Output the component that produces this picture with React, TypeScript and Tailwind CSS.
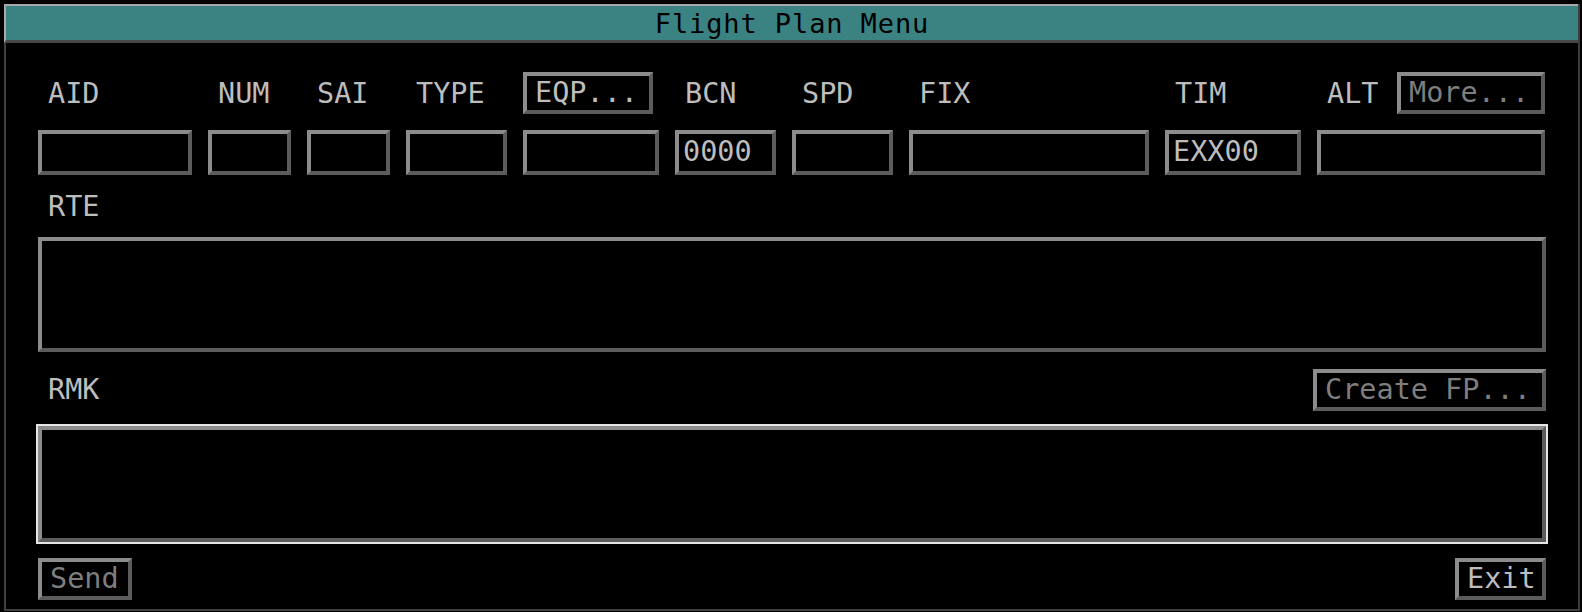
import React from "react";

const bevel =
  "border-4 border-t-[#8c8c8c] border-l-[#8c8c8c] border-b-[#5c5c5c] border-r-[#5c5c5c] bg-black";

function Label({ text }: { text: string }) {
  return (
    <div className="h-[42px] flex items-center pl-[10px] pt-[2px] text-[#bdbdbd]">{text}</div>
  );
}

function Btn({ text, disabled, className = "" }: { text: string; disabled?: boolean; className?: string }) {
  return (
    <div
      className={`h-[42px] flex items-center px-[8px] ${bevel} ${
        disabled ? "text-[#7e7e7e]" : "text-[#bdbdbd]"
      } ${className}`}
    >
      {text}
    </div>
  );
}

function Field({ value = "" }: { value?: string }) {
  return (
    <div className={`h-[45px] flex items-center pl-[4px] text-[#bdbdbd] ${bevel}`}>{value}</div>
  );
}

export default function App() {
  return (
    <div
      className="w-[1582px] h-[612px] bg-black pt-[4px] pl-[4px] pr-[2px] pb-[1px] text-[28.5px] leading-none"
      style={{ fontFamily: '"DejaVu Sans Mono", "Liberation Mono", monospace' }}
    >
      <div className="h-full flex flex-col border-r-2 border-[#3c3c3c]">
        <div className="h-[39px] shrink-0 bg-[#3b8383] border-t-2 border-l-2 border-[#a8a8a8] border-b-[3px] border-b-[#484848] flex items-center justify-center text-black text-[27px] tracking-[0.9px]">
          Flight Plan Menu
        </div>
        <div className="flex-1 flex flex-col border-l-2 border-b-2 border-[#404040] px-[32px] pt-[29px]">
          <div className="grid grid-cols-[154px_83px_83px_101px_136px_101px_101px_240px_136px_228px] gap-x-[16px] gap-y-[16px]">
            <Label text="AID" />
            <Label text="NUM" />
            <Label text="SAI" />
            <Label text="TYPE" />
            <div className="flex">
              <Btn text="EQP..." className="w-[130px]" />
            </div>
            <Label text="BCN" />
            <Label text="SPD" />
            <Label text="FIX" />
            <Label text="TIM" />
            <div className="flex items-center justify-between">
              <Label text="ALT" />
              <Btn text="More..." disabled className="w-[148px]" />
            </div>
            <Field />
            <Field />
            <Field />
            <Field />
            <Field />
            <Field value="0000" />
            <Field />
            <Field />
            <Field value="EXX00" />
            <Field />
          </div>
          <div className="mt-[12px] h-[40px] flex items-center pl-[10px] text-[#bdbdbd]">RTE</div>
          <div className={`mt-[10px] h-[115px] ${bevel}`} />
          <div className="mt-[17px] flex items-center justify-between">
            <div className="pl-[10px] text-[#bdbdbd]">RMK</div>
            <Btn text="Create FP..." disabled className="w-[233px] px-[8px]" />
          </div>
          <div className="mt-[13px] -mx-[2px] border-2 border-[#e6e6e6]">
            <div className={`h-[116px] ${bevel}`} />
          </div>
          <div className="mt-[14px] flex items-center justify-between">
            <Btn text="Send" disabled className="w-[94px] px-[8px]" />
            <Btn text="Exit" className="w-[91px] px-[8px]" />
          </div>
        </div>
      </div>
    </div>
  );
}
